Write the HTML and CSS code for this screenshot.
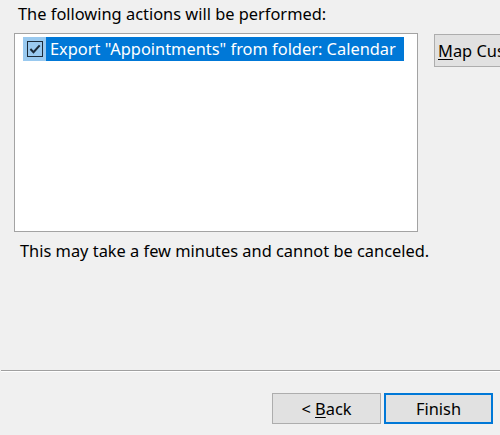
FILE: index.html
```html
<!DOCTYPE html>
<html>
<head>
<meta charset="utf-8">
<link rel="stylesheet" href="styles.css">
</head>
<body>
<div class="page">
  <div class="title">The following actions will be performed:</div>
  <div class="row">
    <div class="listbox">
      <div class="item">
        <div class="check-cell">
          <span class="checkbox">
            <svg width="14" height="14" viewBox="0 0 14 14"><path d="M2.4 7 L5.5 10.2 L11.7 3.4" fill="none" stroke="#1b2a38" stroke-width="2"/></svg>
          </span>
        </div>
        <div class="item-text">Export "Appointments" from folder: Calendar</div>
      </div>
    </div>
    <button class="btn map"><u>M</u>ap Custom Fields...</button>
  </div>
  <div class="note">This may take a few minutes and cannot be canceled.</div>
  <div class="spacer"></div>
  <div class="separator"></div>
  <div class="footer">
    <button class="btn"><span>&lt; <u>B</u>ack</span></button>
    <button class="btn default">Finish</button>
  </div>
</div>
</body>
</html>
```
FILE: styles.css
```css
html, body {
  margin: 0;
  padding: 0;
  background: #f0f0f0;
  overflow: hidden;
}
body {
  width: 500px;
  height: 435px;
  font-family: "Noto Sans", "Open Sans", sans-serif;
  font-size: 16.4px;
  color: #000;
}
.page {
  display: flex;
  flex-direction: column;
  height: 435px;
}
.title {
  padding: 3px 0 0 18px;
  line-height: 22px;
  height: 30px;
  box-sizing: border-box;
  white-space: nowrap;
}
.row {
  display: flex;
  align-items: flex-start;
  white-space: nowrap;
  margin-top: 3px;
}
.listbox {
  margin-left: 14px;
  width: 402px;
  height: 197px;
  flex: none;
  background: #fff;
  border: 1px solid #a3a3a3;
  box-sizing: content-box;
}
.item {
  display: flex;
  margin-top: 3px;
  margin-left: 8px;
  height: 24px;
}
.check-cell {
  width: 23px;
  height: 24px;
  background: #99c9ef;
  display: flex;
  align-items: center;
}
.checkbox {
  width: 14px;
  height: 14px;
  border: 1px solid #1b2a38;
  background: #99c9ef;
  display: flex;
  margin-left: 4px;
}
.item-text {
  background: #0078d7;
  color: #fff;
  width: 358px;
  padding-left: 4px;
  line-height: 24px;
  box-sizing: border-box;
}
.btn {
  font-family: inherit;
  font-size: 16.4px;
  color: #000;
  background: #e1e1e1;
  border: 1px solid #adadad;
  padding: 0;
  margin: 0;
  flex: none;
}
.btn u {
  text-decoration-thickness: 1px;
  text-underline-offset: 2px;
}
.map {
  margin-left: 16px;
  margin-top: 1px;
  height: 33px;
  width: 160px;
  text-align: left;
  padding-left: 3px;
}
.note {
  margin-top: 9px;
  padding-left: 20px;
  line-height: 20px;
  white-space: nowrap;
}
.spacer {
  height: 109px;
}
.separator {
  margin-left: 1px;
  height: 1px;
  background: #a0a0a0;
  border-bottom: 1px solid #fff;
}
.footer {
  display: flex;
  justify-content: flex-end;
  gap: 3px;
  padding-top: 21px;
  padding-right: 7px;
}
.footer .btn {
  width: 109px;
  height: 31px;
}
.default {
  border: 2px solid #0078d7;
}
```
